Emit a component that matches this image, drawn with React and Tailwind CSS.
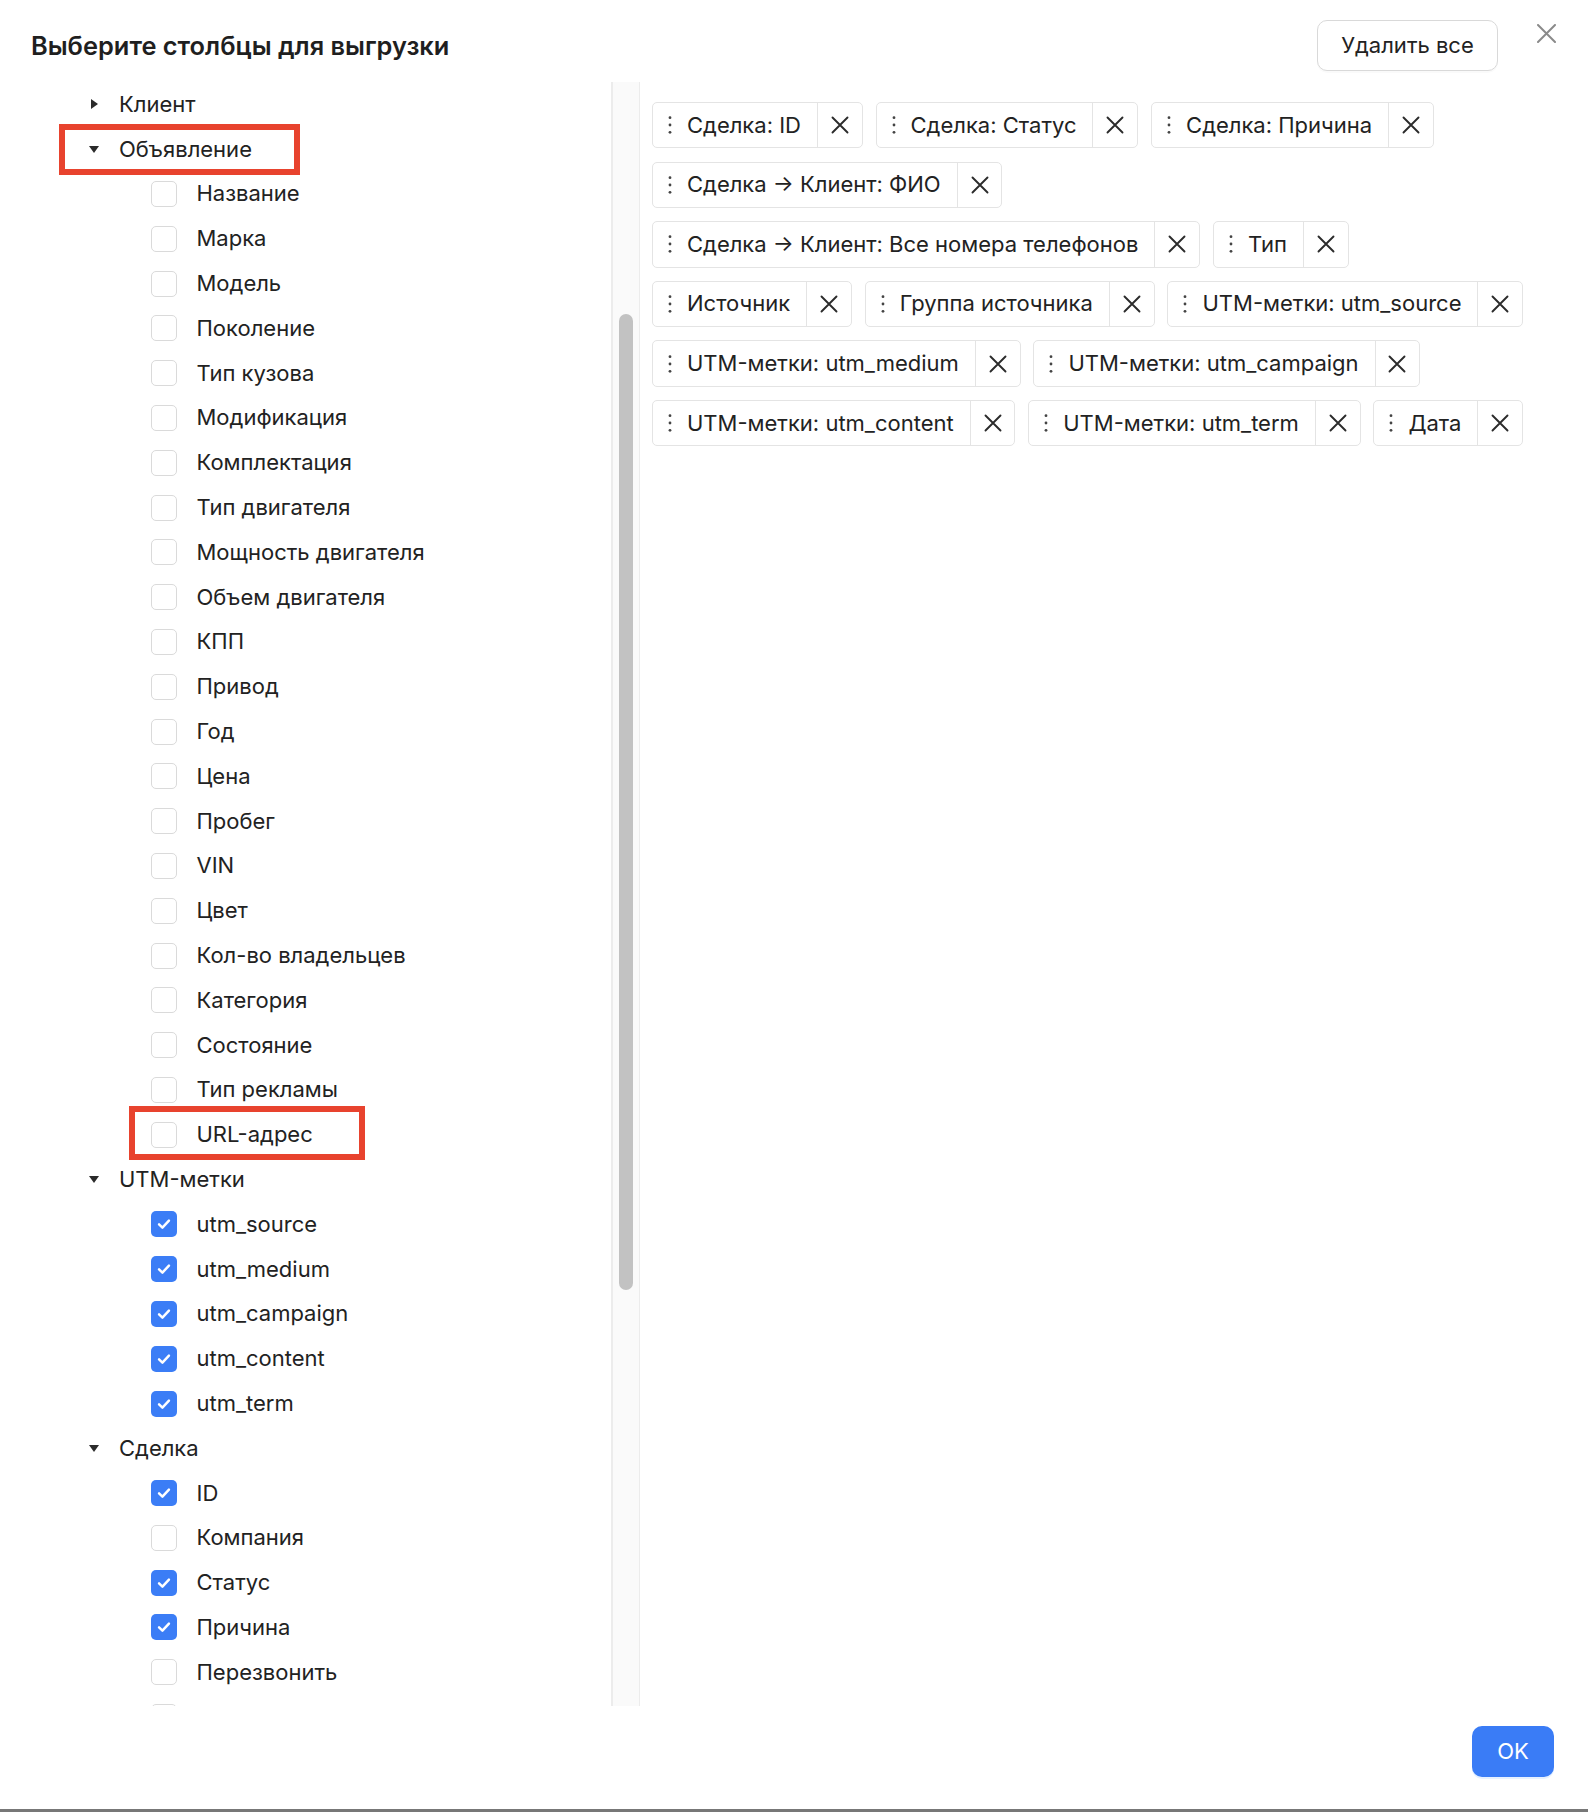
import React from "react";

const tree = [
  { label: "Клиент", open: false },
  {
    label: "Объявление",
    open: true,
    marked: true,
    children: [
      "Название", "Марка", "Модель", "Поколение", "Тип кузова", "Модификация",
      "Комплектация", "Тип двигателя", "Мощность двигателя", "Объем двигателя",
      "КПП", "Привод", "Год", "Цена", "Пробег", "VIN", "Цвет",
      "Кол-во владельцев", "Категория", "Состояние", "Тип рекламы",
      { label: "URL-адрес", marked: true },
    ],
  },
  {
    label: "UTM-метки",
    open: true,
    children: [
      { label: "utm_source", checked: true },
      { label: "utm_medium", checked: true },
      { label: "utm_campaign", checked: true },
      { label: "utm_content", checked: true },
      { label: "utm_term", checked: true },
    ],
  },
  {
    label: "Сделка",
    open: true,
    children: [
      { label: "ID", checked: true },
      "Компания",
      { label: "Статус", checked: true },
      { label: "Причина", checked: true },
      "Перезвонить",
      { label: "", key: "next" },
    ],
  },
];

// chips as they wrap in the panel
const selectedRows = [
  ["Сделка: ID", "Сделка: Статус", "Сделка: Причина"],
  ["Сделка → Клиент: ФИО"],
  ["Сделка → Клиент: Все номера телефонов", "Тип"],
  ["Источник", "Группа источника", "UTM-метки: utm_source"],
  ["UTM-метки: utm_medium", "UTM-метки: utm_campaign"],
  ["UTM-метки: utm_content", "UTM-метки: utm_term", "Дата"],
];

function Caret({ open }) {
  return open ? (
    <svg width="10" height="7" viewBox="0 0 10 7">
      <polygon points="0,0 10,0 5,7" fill="#2b2b2b" />
    </svg>
  ) : (
    <svg width="7" height="10" viewBox="0 0 7 10">
      <polygon points="0,0 7,5 0,10" fill="#2b2b2b" />
    </svg>
  );
}

function Checkbox({ checked }) {
  if (checked) {
    return (
      <span className="flex h-[26px] w-[26px] shrink-0 items-center justify-center rounded-[5px] bg-[#3b7df6]">
        <svg width="18" height="18" viewBox="0 0 16 16">
          <path d="M3.6 8.3 6.6 11.2 12.4 5" fill="none" stroke="#fff" strokeWidth="2.2" strokeLinecap="round" strokeLinejoin="round" />
        </svg>
      </span>
    );
  }
  return <span className="block h-[26px] w-[26px] shrink-0 rounded-[5px] border-[1.5px] border-[#dadada] bg-white" />;
}

function Marker({ className }) {
  return <div className={"pointer-events-none absolute border-[6px] border-[#e8432e] " + className} />;
}

function TreeRow({ children, marked, markClass }) {
  return (
    <div className="relative flex h-[44.8px] shrink-0 items-center">
      {children}
      {marked && <Marker className={markClass} />}
    </div>
  );
}

function Tree() {
  return (
    <div className="flex flex-col">
      {tree.map((node) => (
        <React.Fragment key={node.label}>
          <TreeRow marked={node.marked} markClass="left-[59px] top-[-3px] h-[51px] w-[241px]">
            <span className="ml-[88px] flex w-[12px] justify-center">
              <Caret open={node.open} />
            </span>
            <span className="ml-[19px]">{node.label}</span>
          </TreeRow>
          {node.open &&
            node.children.map((c) => {
              const item = typeof c === "string" ? { label: c } : c;
              return (
                <TreeRow key={item.key || item.label} marked={item.marked} markClass="left-[129px] top-[-6px] h-[54px] w-[236px]">
                  <span className="ml-[151px]">
                    <Checkbox checked={item.checked} />
                  </span>
                  {item.label && <span className="ml-[19.5px]">{item.label}</span>}
                </TreeRow>
              );
            })}
        </React.Fragment>
      ))}
    </div>
  );
}

function Chip({ label }) {
  return (
    <div className="flex h-[46.4px] items-stretch rounded-[5px] border border-[#e4e4e4] bg-white">
      <div className="flex items-center pl-[8px] pr-[16px]">
        <svg width="18" height="22" viewBox="0 0 18 22" className="shrink-0">
          <circle cx="9" cy="3.7" r="1.4" fill="#444" />
          <circle cx="9" cy="11" r="1.4" fill="#444" />
          <circle cx="9" cy="18.3" r="1.4" fill="#444" />
        </svg>
        <span className="ml-[8px] whitespace-nowrap">{label}</span>
      </div>
      <button className="flex w-[44.8px] items-center justify-center border-l border-[#e4e4e4]">
        <svg width="18" height="18" viewBox="0 0 18 18">
          <path d="M1.5 1.5 16.5 16.5M16.5 1.5 1.5 16.5" stroke="#2b2b2b" strokeWidth="1.9" strokeLinecap="round" />
        </svg>
      </button>
    </div>
  );
}

export default function App() {
  return (
    <div className="flex h-[1812px] w-[1588px] flex-col bg-white font-[Inter,sans-serif] text-[22px] text-[#222]">
      <header className="flex h-[82px] shrink-0 items-start justify-between pr-[32px]">
        <h1 className="pl-[31px] pt-[30px] text-[25.4px] leading-[32px] font-semibold text-[#1f1f1f]">
          Выберите столбцы для выгрузки
        </h1>
        <div className="flex items-start">
          <button className="mt-[20px] h-[51px] w-[181px] rounded-[10px] border border-[#d9d9d9] bg-white text-[22px] text-[#222] shadow-[0_2px_0_rgba(0,0,0,0.02)]">
            Удалить все
          </button>
          <button className="ml-[39px] mt-[24px]">
            <svg width="19" height="19" viewBox="0 0 19 19">
              <path d="M1 1 18 18M18 1 1 18" stroke="#8a8a8a" strokeWidth="2" strokeLinecap="round" />
            </svg>
          </button>
        </div>
      </header>

      <div className="flex h-[1624px] shrink-0">
        <div className="w-[611px] shrink-0 overflow-hidden">
          <Tree />
        </div>
        <div className="relative w-[29px] shrink-0 border-l-[2px] border-r border-[#ececec] bg-[#fafafa]">
          <div className="absolute left-[6px] top-[232px] h-[976px] w-[14px] rounded-full bg-[#c2c2c2]" />
        </div>
        <div className="flex flex-1 flex-col gap-[13.2px] pl-[12px] pt-[20px]">
          {selectedRows.map((row, i) => (
            <div key={i} className="flex gap-[12.8px]">
              {row.map((s) => (
                <Chip key={s} label={s} />
              ))}
            </div>
          ))}
        </div>
      </div>

      <footer className="flex flex-1 items-start justify-end pr-[34px] pt-[20px]">
        <button className="h-[51px] w-[82px] rounded-[10px] bg-[#3a7cf6] text-[22px] text-white shadow-[0_2px_0_rgba(5,120,255,0.1)]">
          OK
        </button>
      </footer>
      <div className="h-[3px] shrink-0 bg-[#777]" />
    </div>
  );
}
